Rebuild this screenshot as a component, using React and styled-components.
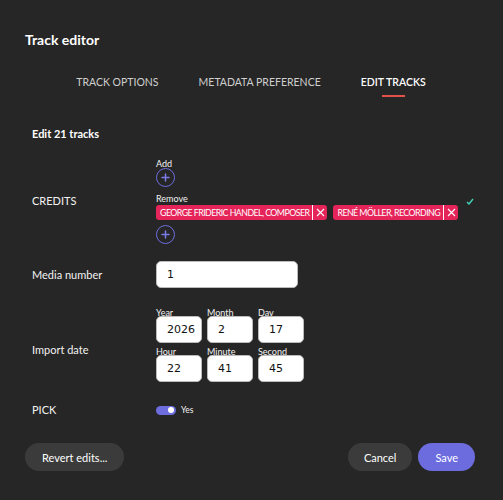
import styled, { createGlobalStyle } from 'styled-components';

const GlobalStyle = createGlobalStyle`
  html, body {
    margin: 0;
    background: #262626;
  }
  body {
    font-family: Lato, "Noto Sans", sans-serif;
    color: #f2f2f2;
  }
`;

const Root = styled.div`
  width: 503px;
  height: 500px;
  box-sizing: border-box;
  padding: 31px 25px 0 25px;
  display: flex;
  flex-direction: column;
`;

const Title = styled.div`
  font-size: 14px;
  font-weight: 700;
  line-height: 18px;
  color: #fff;
`;

const Tabs = styled.div`
  display: flex;
  justify-content: center;
  gap: 40px;
  margin-top: 26px;
  padding-right: 1px;
`;

const Tab = styled.div`
  font-size: 10.5px;
  line-height: 14px;
  font-weight: ${p => (p.$active ? 600 : 400)};
  color: ${p => (p.$active ? '#fff' : '#cfcfcf')};
  display: flex;
  flex-direction: column;
  align-items: center;
  gap: 6px;

  &::after {
    content: '';
    width: 23px;
    height: 2px;
    background: ${p => (p.$active ? '#e0524a' : 'transparent')};
  }
`;

const Section = styled.div`
  padding: 0 7px;
  margin-top: 30px;
  display: flex;
  flex-direction: column;
`;

const SectionTitle = styled.div`
  font-size: 11px;
  font-weight: 700;
  line-height: 14px;
  color: #fff;
`;

const Row = styled.div`
  display: grid;
  grid-template-columns: 124px 1fr;
  align-items: center;
  margin-top: ${p => p.$mt || 0}px;
`;

const Label = styled.div`
  font-size: 11px;
  line-height: 14px;
  color: #f2f2f2;
  padding-top: ${p => p.$pt || 0}px;
`;

const Stack = styled.div`
  display: flex;
  flex-direction: column;
`;

const SmallLabel = styled.div`
  font-size: 9px;
  line-height: 11px;
  color: #f2f2f2;
  margin-top: ${p => p.$mt || 0}px;
`;

const CircleButton = styled.button`
  width: 19px;
  height: 19px;
  border-radius: 50%;
  border: 1.3px solid #6d6de0;
  background: transparent;
  padding: 0;
  display: flex;
  align-items: center;
  justify-content: center;
  margin-top: ${p => p.$mt || 0}px;
`;

const ChipRow = styled.div`
  display: flex;
  align-items: center;
  gap: 6px;
  margin-top: 1px;
  position: relative;
`;

const Chip = styled.div`
  height: 15px;
  display: flex;
  align-items: stretch;
  background: #e5245a;
  border-radius: 3px;
  color: #fff;
  font-size: 8.8px;
  letter-spacing: -0.55px;
  line-height: 15px;
  white-space: nowrap;
`;

const ChipText = styled.span`
  padding: 0 3px 0 4px;
`;

const ChipClose = styled.span`
  width: 14px;
  border-left: 1px solid #fff;
  display: flex;
  align-items: center;
  justify-content: center;
`;

const Check = styled.svg`
  position: absolute;
  left: 310px;
  top: -7px;
`;

const TextInput = styled.div`
  box-sizing: border-box;
  width: ${p => p.$w}px;
  height: 27px;
  background: #fff;
  border: 1px solid #bbb;
  border-radius: 5px;
  color: #111;
  font-family: "DejaVu Sans", Verdana, sans-serif;
  font-size: 11px;
  line-height: 25px;
  padding-left: 10px;
`;

const DateGrid = styled.div`
  display: grid;
  grid-template-columns: repeat(3, 46px);
  column-gap: 5px;
`;

const DateField = styled.div`
  display: flex;
  flex-direction: column;
  margin-top: ${p => p.$mt || 0}px;
`;

const DateLabel = styled.div`
  font-size: 9px;
  line-height: 11px;
  color: #f2f2f2;
  margin-bottom: -2px;
`;

const Toggle = styled.div`
  display: flex;
  align-items: center;
  gap: 5px;
  font-size: 8.5px;
  color: #f2f2f2;
`;

const Track = styled.div`
  width: 20px;
  height: 9px;
  border-radius: 5px;
  background: #6d6de0;
  display: flex;
  align-items: center;
  justify-content: flex-end;
  padding-right: 2px;
  box-sizing: border-box;
`;

const Knob = styled.div`
  width: 6px;
  height: 6px;
  border-radius: 50%;
  background: #fff;
`;

const Footer = styled.div`
  display: flex;
  align-items: center;
  gap: 6px;
  margin-top: 26px;
  padding-right: 3px;
`;

const Spacer = styled.div`
  flex: 1;
`;

const Button = styled.button`
  height: 28px;
  border: none;
  border-radius: 14px;
  padding: 0 ${p => p.$px || 17}px;
  background: ${p => (p.$primary ? '#6c6cde' : '#3b3b3b')};
  color: #fff;
  font-family: Lato, "Noto Sans", sans-serif;
  font-size: 11px;
`;

const Plus = () => (
  <svg width="9" height="9" viewBox="0 0 9 9">
    <path d="M4.5 1v7M1 4.5h7" stroke="#7a7ae8" strokeWidth="1.5" strokeLinecap="round" />
  </svg>
);

const Cross = () => (
  <svg width="9" height="9" viewBox="0 0 9 9">
    <path d="M1 1l7 7M8 1l-7 7" stroke="#fff" strokeWidth="1.1" />
  </svg>
);

const credits = ['GEORGE FRIDERIC HANDEL, COMPOSER', 'RENÉ MÖLLER, RECORDING'];

const dateTop = [['Year', '2026'], ['Month', '2'], ['Day', '17']];
const dateBottom = [['Hour', '22'], ['Minute', '41'], ['Second', '45']];

export default function App() {
  return (
    <Root>
      <GlobalStyle />
      <Title>Track editor</Title>
      <Tabs>
        <Tab>TRACK OPTIONS</Tab>
        <Tab>METADATA PREFERENCE</Tab>
        <Tab $active>EDIT TRACKS</Tab>
      </Tabs>
      <Section>
        <SectionTitle>Edit 21 tracks</SectionTitle>
        <Row $mt={17}>
          <Label>CREDITS</Label>
          <Stack>
            <SmallLabel>Add</SmallLabel>
            <CircleButton $mt={-1}><Plus /></CircleButton>
            <SmallLabel $mt={6}>Remove</SmallLabel>
            <ChipRow>
              {credits.map(c => (
                <Chip key={c}>
                  <ChipText>{c}</ChipText>
                  <ChipClose><Cross /></ChipClose>
                </Chip>
              ))}
              <Check width="8" height="7" viewBox="0 0 8 7">
                <path d="M1 4l2 2 4-5" stroke="#43d1b8" strokeWidth="1.4" fill="none" />
              </Check>
            </ChipRow>
            <CircleButton $mt={5}><Plus /></CircleButton>
          </Stack>
        </Row>
        <Row $mt={17}>
          <Label>Media number</Label>
          <TextInput $w={142}>1</TextInput>
        </Row>
        <Row $mt={19}>
          <Label $pt={11}>Import date</Label>
          <DateGrid>
            {dateTop.map(([l, v]) => (
              <DateField key={l}>
                <DateLabel>{l}</DateLabel>
                <TextInput $w={46}>{v}</TextInput>
              </DateField>
            ))}
            {dateBottom.map(([l, v]) => (
              <DateField key={l} $mt={3}>
                <DateLabel>{l}</DateLabel>
                <TextInput $w={46}>{v}</TextInput>
              </DateField>
            ))}
          </DateGrid>
        </Row>
        <Row $mt={21}>
          <Label>PICK</Label>
          <Toggle>
            <Track><Knob /></Track>
            Yes
          </Toggle>
        </Row>
      </Section>
      <Footer>
        <Button $px={17}>Revert edits...</Button>
        <Spacer />
        <Button $px={16}>Cancel</Button>
        <Button $primary $px={17}>Save</Button>
      </Footer>
    </Root>
  );
}
